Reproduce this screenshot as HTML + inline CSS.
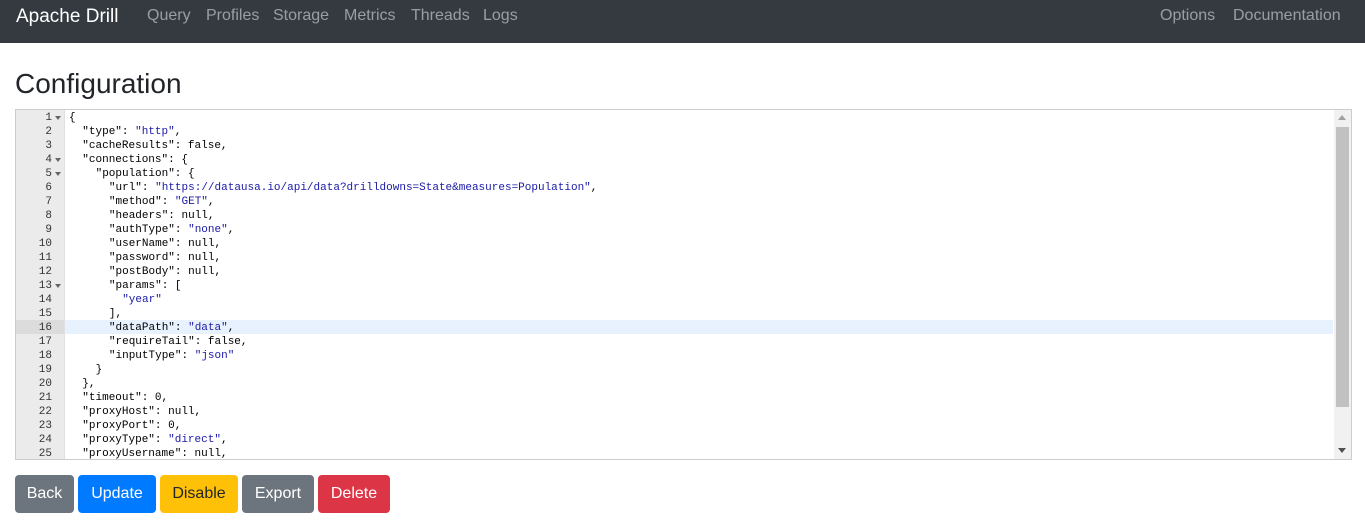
<!DOCTYPE html><html><head><style>
body{margin:0;width:1365px;height:530px;overflow:hidden;background:#fff;font-family:"Liberation Sans",sans-serif}
.nav{height:43px;background:#343a40;position:relative}
.nav span{position:absolute;top:7px;font-size:16px;color:rgba(255,255,255,.5)}
.nav .b{color:#fff;font-size:19px;top:6px;left:16px}
h1{position:absolute;left:15px;top:68px;margin:0;font-size:28px;font-weight:500;color:#212529}
.ed{position:absolute;left:15px;top:109px;width:1335px;height:349px;border:1px solid #ccc;overflow:hidden;font-family:"Liberation Mono",monospace;font-size:11px}
.gut{position:absolute;left:0;top:0;width:48px;height:100%;background:#ebebeb;border-right:1px solid #e0e0e0}
.ln{position:absolute;height:14px;line-height:14px;white-space:pre;color:#000}
.num{position:absolute;right:12px;color:#333}
.s{color:#1a1aa6}
.hl{position:absolute;left:49px;top:210px;width:1268px;height:14px;background:#e8f2fe}
.ghl{position:absolute;left:0;top:210px;width:48px;height:14px;background:#dcdcdc}
.sb{position:absolute;left:1318px;top:0;width:17px;height:100%;background:#f1f1f1}
.th{position:absolute;left:2px;top:17px;width:13px;height:280px;background:#c1c1c1}
.btn{position:absolute;top:475px;height:38px;line-height:38px;color:#fff;font-size:16px;text-align:center;border-radius:4px}
</style></head><body>
<div class="nav"><span class="b">Apache Drill</span><span style="left:147px">Query</span><span style="left:206px">Profiles</span><span style="left:273px">Storage</span><span style="left:344px">Metrics</span><span style="left:411px">Threads</span><span style="left:483px">Logs</span><span style="left:1160px">Options</span><span style="left:1233px">Documentation</span></div>
<h1>Configuration</h1>
<div class="ed">
<div class="gut"></div><div class="ghl"></div><div class="hl"></div>
<div class="sb"><div class="th"></div><div style="position:absolute;left:4px;top:5px;border:4px solid transparent;border-bottom:5px solid #a0a0a0;border-top:0"></div><div style="position:absolute;left:4px;bottom:6px;border:4px solid transparent;border-top:5px solid #505050;border-bottom:0"></div></div>
<div id="c"></div>
</div>
<div class="btn" style="left:15px;width:59px;background:#6c757d">Back</div>
<div class="btn" style="left:78px;width:78px;background:#007bff">Update</div>
<div class="btn" style="left:160px;width:78px;background:#ffc107;color:#212529">Disable</div>
<div class="btn" style="left:242px;width:72px;background:#6c757d">Export</div>
<div class="btn" style="left:318px;width:72px;background:#dc3545">Delete</div>
<script>
var L=[[0,'{'],[1,'"type": <s>"http"</s>,'],[1,'"cacheResults": false,'],[1,'"connections": {'],[2,'"population": {'],[3,'"url": <s>"https://datausa.io/api/data?drilldowns=State&amp;measures=Population"</s>,'],[3,'"method": <s>"GET"</s>,'],[3,'"headers": null,'],[3,'"authType": <s>"none"</s>,'],[3,'"userName": null,'],[3,'"password": null,'],[3,'"postBody": null,'],[3,'"params": ['],[4,'<s>"year"</s>'],[3,'],'],[3,'"dataPath": <s>"data"</s>,'],[3,'"requireTail": false,'],[3,'"inputType": <s>"json"</s>'],[2,'}'],[1,'},'],[1,'"timeout": 0,'],[1,'"proxyHost": null,'],[1,'"proxyPort": 0,'],[1,'"proxyType": <s>"direct"</s>,'],[1,'"proxyUsername": null,']];
var f={1:1,4:1,5:1,13:1},h='';
L.forEach(function(l,i){var t=i*14+1;
h+='<div class="ln" style="left:0;width:48px;top:'+t+'px"><span class="num">'+(i+1)+'</span>'+(f[i+1]?'<span style="position:absolute;left:39px;top:5px;border:3px solid transparent;border-top:4px solid #666;border-bottom:0"></span>':'')+'</div>';
h+='<div class="ln" style="left:'+(53+l[0]*13.3)+'px;top:'+t+'px">'+l[1].replace(/<s>/g,'<span class="s">').replace(/<\/s>/g,'</span>')+'</div>';});
document.getElementById('c').innerHTML=h;
</script>
</body></html>
